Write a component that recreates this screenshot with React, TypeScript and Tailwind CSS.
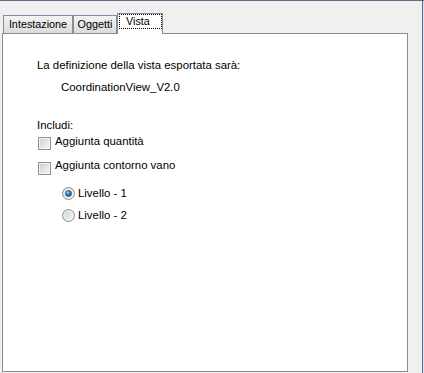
import React from "react";

type TabItem = {
	label: string;
	width: string;
};

const tabs: TabItem[] = [
	{ label: "Intestazione", width: "w-[70px]" },
	{ label: "Oggetti", width: "w-[44px]" },
];

function CheckBox() {
	return (
		<div className="w-[13px] h-[13px] shrink-0 border border-[#8e8f8f] bg-[#f4f4f4] p-[1px]">
			<div className="w-full h-full bg-gradient-to-br from-[#cfcfcf] to-[#f6f6f6]" />
		</div>
	);
}

function Radio({ checked, id }: { checked?: boolean; id: string }) {
	return (
		<svg width="13" height="13" viewBox="0 0 13 13" className="shrink-0">
			<defs>
				<linearGradient id={`${id}-bg`} x1="0" y1="0" x2="1" y2="1">
					<stop offset="0" stopColor="#cfcfcf" />
					<stop offset="1" stopColor="#f8f8f8" />
				</linearGradient>
				<radialGradient id={`${id}-dot`} cx="0.4" cy="0.35" r="0.7">
					<stop offset="0" stopColor="#b9e0ff" />
					<stop offset="0.45" stopColor="#2f7fc4" />
					<stop offset="1" stopColor="#0d3f6e" />
				</radialGradient>
			</defs>
			<circle cx="6.5" cy="6.5" r="6" fill={`url(#${id}-bg)`} stroke="#8e8f8f" />
			<circle cx="6.5" cy="6.5" r="4.5" fill="none" stroke="#f4f4f4" strokeWidth="0.8" />
			{checked && (
				<circle cx="6.5" cy="6.5" r="3" fill={`url(#${id}-dot)`} stroke="#1c4b78" strokeWidth="0.6" />
			)}
		</svg>
	);
}

export default function App() {
	return (
		<div className="w-[424px] h-[373px] flex border-t border-[#5b6e85] bg-[#f0f0f0] overflow-hidden font-['Liberation_Sans',Arial,sans-serif] text-[11.4px] leading-[13px] text-black">
			<div className="w-[422px] flex flex-col pt-[12px] pl-[2px]">
				{/* tab headers */}
				<div className="flex h-[21px] pl-px text-[10.8px]">
					{tabs.map(({ label, width }) => (
						<div
							key={label}
							className={`${width} mt-[2px] h-[19px] border-l border-t border-r border-[#898c95] bg-gradient-to-b from-[#f3f3f3] via-[#e8e8e8] to-[#d9d9d9] pt-[2px] text-center whitespace-nowrap`}
						>
							{label}
						</div>
					))}
					<div className="relative z-10 w-[46px] h-[21px] border-l border-t border-r border-[#898c95] bg-white">
						<div className="ml-px w-[43px] h-[15px] border border-dotted border-black pl-[6px]">
							Vista
						</div>
					</div>
				</div>

				{/* tab page */}
				<div className="-mt-px w-[406px] h-[339px] border border-[#898c95] bg-white pt-[25px] pl-[34px]">
					<div>La definizione della vista esportata sarà:</div>
					<div className="mt-[9px] ml-[24px]">CoordinationView_V2.0</div>

					<div className="mt-[25px]">Includi:</div>
					<div className="mt-[3px] flex items-start gap-[4px] pl-[1px]">
						<div className="mt-[2px]">
							<CheckBox />
						</div>
						<span>Aggiunta quantità</span>
					</div>
					<div className="mt-[9px] flex items-start gap-[4px] pl-[1px]">
						<div className="mt-[3px]">
							<CheckBox />
						</div>
						<span>Aggiunta contorno vano</span>
					</div>

					<div className="mt-[12px] flex items-start gap-[3px] pl-[25px]">
						<Radio id="lv1" checked />
						<span>Livello - 1</span>
					</div>
					<div className="mt-[9px] flex items-start gap-[3px] pl-[25px]">
						<Radio id="lv2" />
						<span>Livello - 2</span>
					</div>
				</div>
			</div>
			<div className="w-px bg-[#5b6e85]" />
			<div className="w-px bg-[#dde6f0]" />
		</div>
	);
}
